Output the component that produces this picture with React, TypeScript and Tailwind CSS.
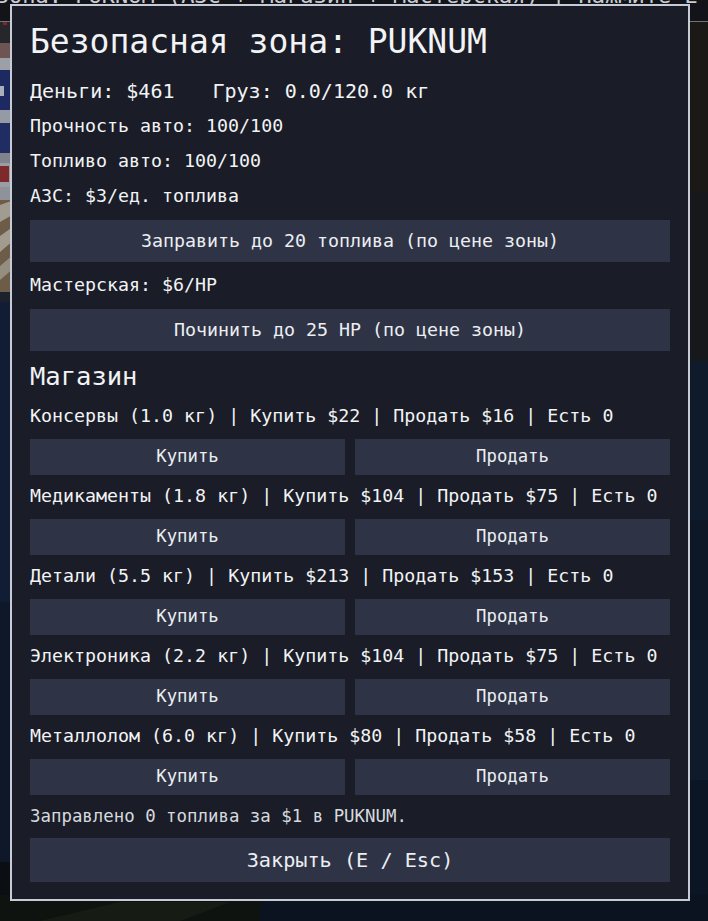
import React from 'react';

type Good = { name: string; weight: string; buy: number; sell: number; have: number };

const goods: Good[] = [
  { name: 'Консервы', weight: '1.0', buy: 22, sell: 16, have: 0 },
  { name: 'Медикаменты', weight: '1.8', buy: 104, sell: 75, have: 0 },
  { name: 'Детали', weight: '5.5', buy: 213, sell: 153, have: 0 },
  { name: 'Электроника', weight: '2.2', buy: 104, sell: 75, have: 0 },
  { name: 'Металлолом', weight: '6.0', buy: 80, sell: 58, have: 0 },
];

const mono = "font-['DejaVu_Sans_Mono','Liberation_Mono',monospace]";

// game world behind the zone menu
const Scene = () => (
  <svg className="absolute inset-0" width="708" height="921" viewBox="0 0 708 921">
    <rect width="708" height="921" fill="#0d1522" />
    {/* shop sign on the left */}
    <rect x="0" y="21" width="14" height="22" fill="#26272a" />
    <rect x="3" y="22" width="4" height="3" fill="#7a2a2a" />
    <rect x="0" y="43" width="14" height="15" fill="#6f5454" />
    <rect x="0" y="58" width="14" height="12" fill="#9a9fa8" />
    <rect x="0" y="70" width="14" height="40" fill="#1d2a62" />
    <rect x="0" y="86" width="4" height="10" fill="#aab0b9" />
    <rect x="0" y="110" width="14" height="13" fill="#969aa4" />
    <rect x="0" y="123" width="14" height="30" fill="#202d62" />
    <rect x="0" y="153" width="14" height="10" fill="#80838c" />
    <rect x="0" y="163" width="14" height="24" fill="#9a9da4" />
    <rect x="0" y="166" width="9" height="16" fill="#7e2a2c" />
    <rect x="0" y="187" width="14" height="13" fill="#8f9298" />
    <rect x="0" y="200" width="14" height="92" fill="#6c5c48" />
    <polygon points="0,205 14,200 14,214 0,222" fill="#a19b90" />
    <polygon points="0,236 14,226 14,240 0,252" fill="#a19b90" />
    <polygon points="0,266 14,254 14,268 0,280" fill="#958d80" />
    <rect x="0" y="292" width="14" height="10" fill="#1b222c" />
    <rect x="0" y="302" width="14" height="300" fill="#111d35" />
    <rect x="0" y="602" width="14" height="260" fill="#0e1829" />
    <rect x="0" y="862" width="14" height="59" fill="#0b0f14" />
    {/* right side: wall, road, water */}
    <rect x="686" y="21" width="22" height="170" fill="#1b1915" />
    <rect x="686" y="191" width="22" height="170" fill="#16181c" />
    <rect x="686" y="361" width="22" height="560" fill="#0f1a2b" />
    <rect x="686" y="520" width="22" height="120" fill="#0d1726" />
    <rect x="686" y="780" width="22" height="141" fill="#0c1524" />
    {/* bottom edge */}
    <rect x="0" y="895" width="260" height="26" fill="#0e130f" />
    <polygon points="40,921 120,902 230,902 180,921" fill="#161c14" />
    <rect x="260" y="895" width="448" height="26" fill="#0b1321" />
  </svg>
);

const ShopButton = ({ label }: { label: string }) => (
  <button className="h-9 bg-[#2e3446] text-[17.3px] text-[#eceef2]">{label}</button>
);

export default function App() {
  return (
    <div className={`relative w-[708px] h-[921px] overflow-hidden bg-[#0d1522] ${mono}`}>
      <Scene />

      {/* HUD hint bar, mostly hidden behind the menu */}
      <div className="relative h-[22px] overflow-hidden whitespace-nowrap border-b border-[#707276] bg-[#121419]">
        <div className="-mt-[15px] -ml-[150px] text-[22px] leading-[22px] text-[#c9ccd2]">
          Безопасная зона: PUKNUM (АЗС + Магазин + Мастерская) | Нажмите E
        </div>
      </div>

      <div className="absolute left-[10px] top-[4px] flex w-[680px] h-[897px] flex-col border-2 border-[#c7cbd5] bg-[#1a1d27] px-[18px] pt-[17px] text-[#f2f3f5]">
        <h1 className="text-[33px] leading-[38px]">Безопасная зона: PUKNUM</h1>

        <div className="mt-[16px] text-[20px] leading-[28px]">
          <span>Деньги: $461</span>
          <span className="ml-[38px]">Груз: 0.0/120.0 кг</span>
        </div>
        <div className="mt-[7px] text-[18.3px] leading-[27px]">Прочность авто: 100/100</div>
        <div className="mt-2 text-[18.3px] leading-[27px]">Топливо авто: 100/100</div>
        <div className="mt-2 text-[18.3px] leading-[27px]">АЗС: $3/ед. топлива</div>
        <button className="mt-[11px] h-[42px] bg-[#2e3446] text-[18.3px] text-[#eceef2]">
          Заправить до 20 топлива (по цене зоны)
        </button>

        <div className="mt-[9px] text-[18.3px] leading-[27px]">Мастерская: $6/HP</div>
        <button className="mt-[11px] h-[42px] bg-[#2e3446] text-[18.3px] text-[#eceef2]">
          Починить до 25 HP (по цене зоны)
        </button>

        <h2 className="mt-[9px] text-[25.5px] leading-[32px]">Магазин</h2>

        {goods.map((g, i) => (
          <div key={g.name}>
            <div className={`${i === 0 ? 'mt-3' : 'mt-[9px]'} mb-[11px] text-[18.3px] leading-6`}>
              {g.name} ({g.weight} кг) | Купить ${g.buy} | Продать ${g.sell} | Есть {g.have}
            </div>
            <div className="grid grid-cols-2 gap-[10px]">
              <ShopButton label="Купить" />
              <ShopButton label="Продать" />
            </div>
          </div>
        ))}

        <div className="mt-[9px] text-[17.4px] leading-6 text-[#d6d9df]">
          Заправлено 0 топлива за $1 в PUKNUM.
        </div>

        <button className="mt-[10px] h-[44px] bg-[#2e3446] text-[20.2px] text-[#eceef2]">
          Закрыть (E / Esc)
        </button>
      </div>
    </div>
  );
}
